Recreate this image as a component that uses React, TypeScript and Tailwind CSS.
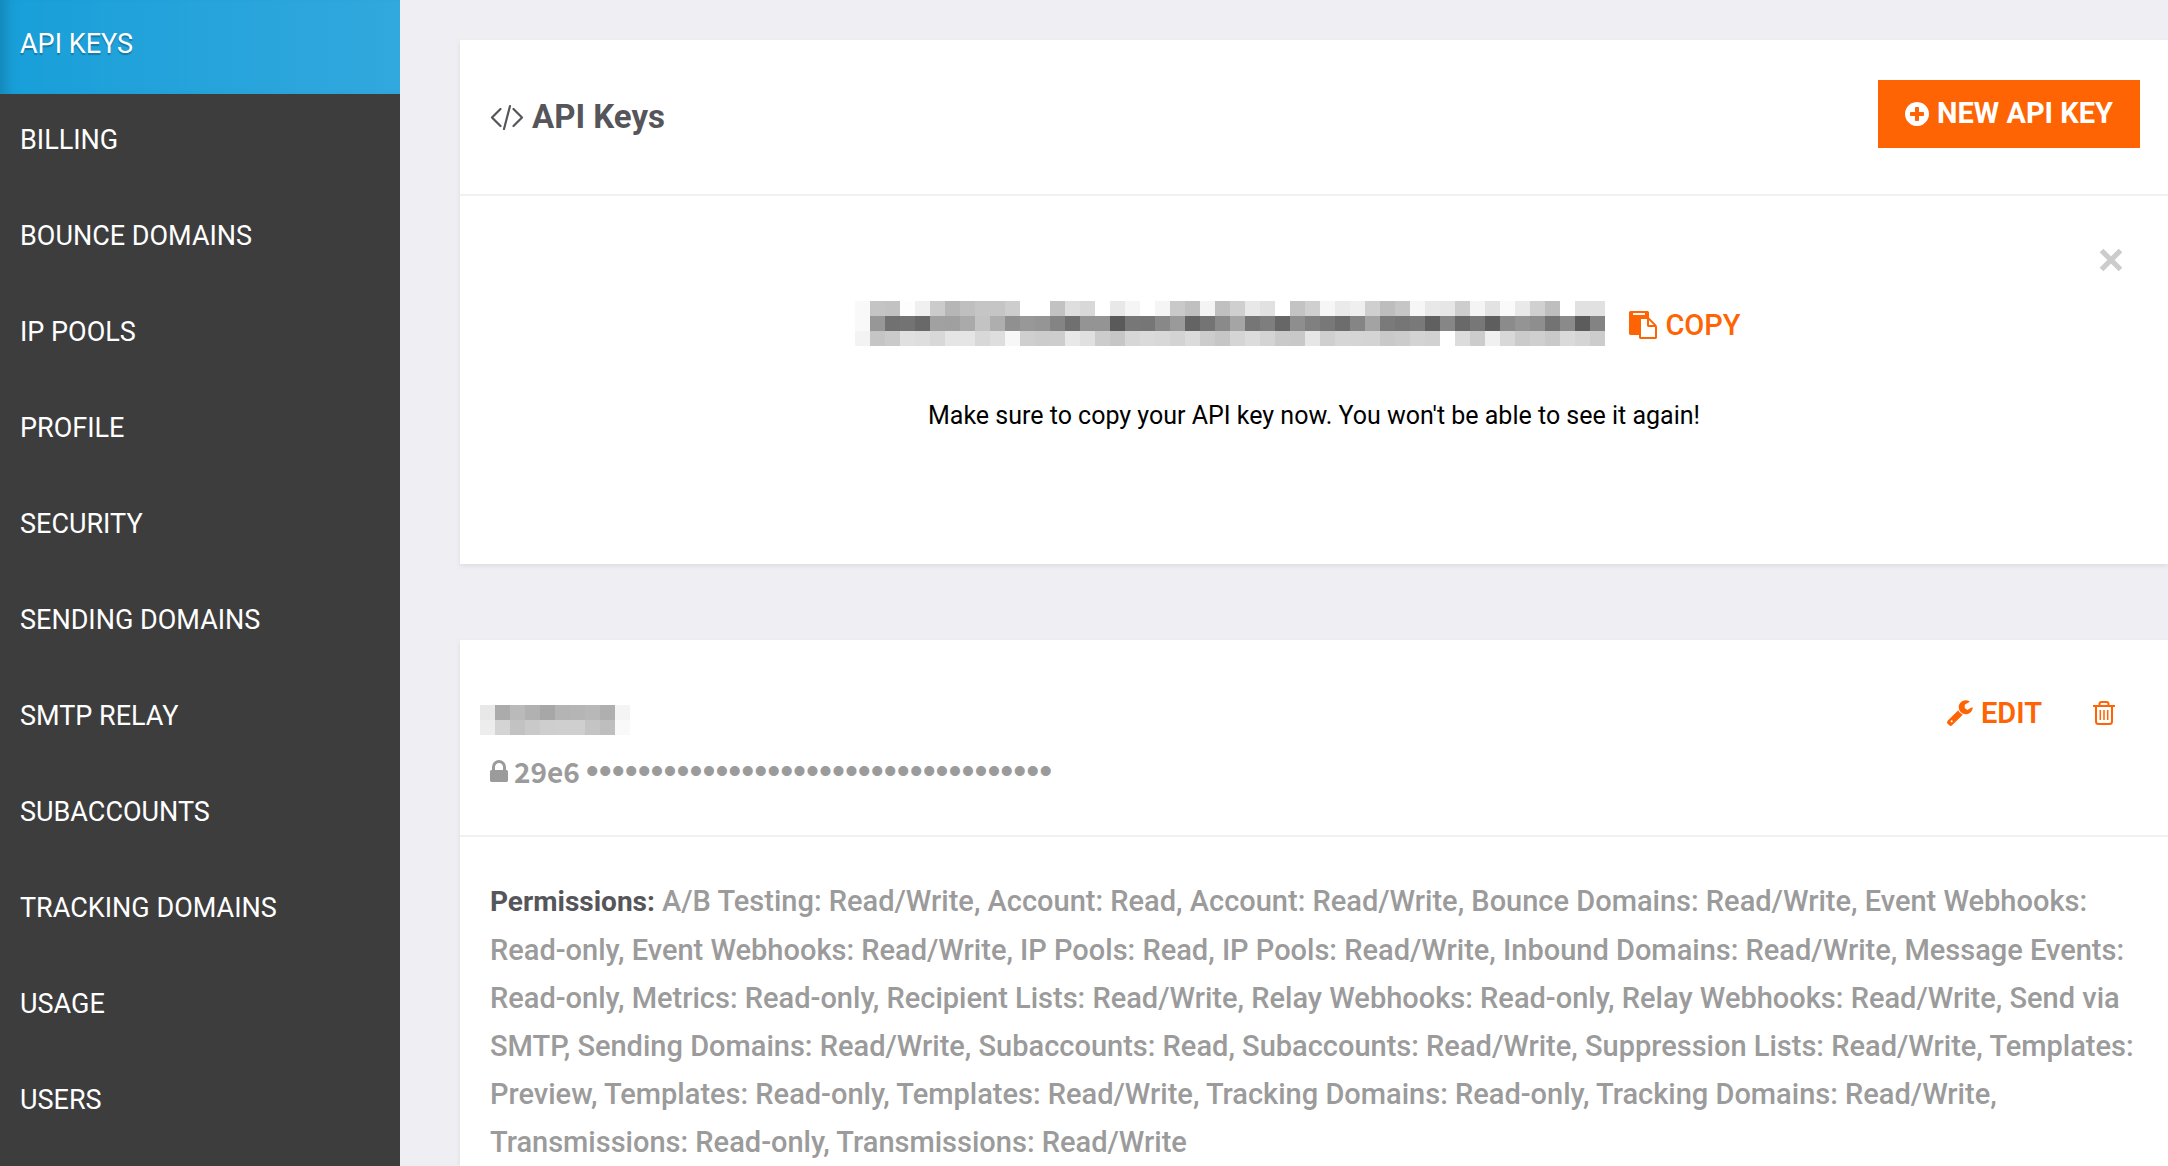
import { clsx } from "clsx";

const NAV_ITEMS = [
	"API Keys",
	"Billing",
	"Bounce Domains",
	"IP Pools",
	"Profile",
	"Security",
	"Sending Domains",
	"SMTP Relay",
	"Subaccounts",
	"Tracking Domains",
	"Usage",
	"Users",
];

const PERMISSIONS = [
	"A/B Testing: Read/Write",
	"Account: Read",
	"Account: Read/Write",
	"Bounce Domains: Read/Write",
	"Event Webhooks: Read-only",
	"Event Webhooks: Read/Write",
	"IP Pools: Read",
	"IP Pools: Read/Write",
	"Inbound Domains: Read/Write",
	"Message Events: Read-only",
	"Metrics: Read-only",
	"Recipient Lists: Read/Write",
	"Relay Webhooks: Read-only",
	"Relay Webhooks: Read/Write",
	"Send via SMTP",
	"Sending Domains: Read/Write",
	"Subaccounts: Read",
	"Subaccounts: Read/Write",
	"Suppression Lists: Read/Write",
	"Templates: Preview",
	"Templates: Read-only",
	"Templates: Read/Write",
	"Tracking Domains: Read-only",
	"Tracking Domains: Read/Write",
	"Transmissions: Read-only",
	"Transmissions: Read/Write",
];

// Grey levels of the redaction blocks, one hex pair per cell
const KEY_BLOCKS = [
	"F9C4C2FDF0CBB6BFC5C5CDFFFFC2DED8FFE8F5FFF5C9C0F4C0CFE8E1FFC3CFF6EAEFCFBDC6F6E8E6CDF4E2FAE9D0BEFFE1E1",
	"F997717369A1A0AAC3AE909895847094945A7776889A64748AA5767E678E80786D85A37A7679608669775E8B948E738A5C83",
	"F3C5CAE0DED8E5E5D8DEF7CFCCCDE8E0CCC6D7DAD8D3DBCCC6D5DCD4CAC8E6CFD6D5D4C9CCD3D1FFDCCCF0D8CBCFC9DAD5CC",
];
const NAME_BLOCKS = ["E8ABBAB1A7B4B5B8AFF4", "EDD4C2C9CECFCFC4BEF9"];

const CELL = 15;

function Redacted({ rows, label }: { rows: string[]; label: string }) {
	const cols = rows[0].length / 2;

	return (
		<svg
			role="img"
			aria-label={label}
			width={cols * CELL}
			height={rows.length * CELL}
			shapeRendering="crispEdges"
			className="shrink-0"
		>
			{rows.map((row, y) =>
				Array.from({ length: cols }, (_, x) => {
					const level = row.slice(x * 2, x * 2 + 2);
					return (
						<rect
							key={`${x}-${y}`}
							x={x * CELL}
							y={y * CELL}
							width={CELL}
							height={CELL}
							fill={`#${level}${level}${level}`}
						/>
					);
				}),
			)}
		</svg>
	);
}

// Font glyph outlines are y-up, so flip them inside the box
function GlyphIcon({
	d,
	viewBox,
	className,
}: {
	d: string;
	viewBox: string;
	className: string;
}) {
	return (
		<svg viewBox={viewBox} fill="currentColor" className={className} aria-hidden="true">
			<path transform="scale(1 -1)" d={d} />
		</svg>
	);
}

function PlusCircleIcon() {
	return (
		<GlyphIcon
			viewBox="0 -1408 1536 1536"
			className="size-6 shrink-0"
			d="M1216 576v128q0 26-19 45t-45 19h-256v256q0 26-19 45t-45 19h-128q-26 0-45-19t-19-45v-256h-256q-26 0-45-19t-19-45v-128q0-26 19-45t45-19h256v-256q0-26 19-45t45-19h128q26 0 45 19t19 45v256h256q26 0 45 19t19 45zM1536 640q0-209-103-385.500t-279.500-279.500-385.500-103-385.500 103-279.500 279.500-103 385.500 103 385.500 279.500 279.500 385.500 103 385.500-103 279.500-279.500 103-385.500z"
		/>
	);
}

function PasteIcon() {
	return (
		<GlyphIcon
			viewBox="0 -1536 1792 1792"
			className="size-7 shrink-0"
			d="M768-128h896v640h-416q-40 0-68 28t-28 68v416h-384v-1152zM1024 1312v64q0 13-9.500 22.500t-22.500 9.500h-704q-13 0-22.500-9.500t-9.500-22.500v-64q0-13 9.500-22.500t22.500-9.500h704q13 0 22.500 9.500t9.500 22.500zM1280 640h299l-299 299v-299zM1792 512v-672q0-40-28-68t-68-28h-960q-40 0-68 28t-28 68v160h-544q-40 0-68 28t-28 68v1344q0 40 28 68t68 28h1088q40 0 68-28t28-68v-328q21-13 36-28l408-408q28-28 48-76t20-88z"
		/>
	);
}

function WrenchIcon() {
	return (
		<GlyphIcon
			viewBox="20 -1420 1660 1660"
			className="size-[26px] shrink-0"
			d="M384 64q0 26-19 45t-45 19-45-19-19-45 19-45 45-19 45 19 19 45zM1028 484l-682-682q-37-37-90-37-52 0-91 37l-106 108q-38 36-38 90 0 53 38 91l681 681q39-98 114.500-173.500t173.500-114.500zM1662 919q0-39-23-106-47-134-164.500-217.500t-258.500-83.500q-185 0-316.500 131.500t-131.500 316.500 131.500 316.500 316.500 131.500q58 0 121.500-16.500t107.500-46.500q16-11 16-28t-16-28l-293-169v-224l193-107q5 3 79 48.500t135.500 81 70.500 35.500q15 0 23.500-10t8.500-25z"
		/>
	);
}

function LockIcon() {
	return (
		<GlyphIcon
			viewBox="0 -1408 1152 1408"
			className="h-[22px] w-[18px] shrink-0"
			d="M320 768h512v192q0 106-75 181t-181 75-181-75-75-181v-192zM1152 672v-576q0-40-28-68t-68-28h-960q-40 0-68 28t-28 68v576q0 40 28 68t68 28h32v192q0 184 132 316t316 132 316-132 132-316v-192h32q40 0 68-28t28-68z"
		/>
	);
}

function CodeIcon() {
	return (
		<svg
			viewBox="0 0 34 26"
			fill="none"
			stroke="currentColor"
			strokeWidth="2.200"
			strokeLinecap="round"
			strokeLinejoin="round"
			className="h-[26px] w-[34px] shrink-0"
			aria-hidden="true"
		>
			<path d="M10.500 5 2 13.500 10.500 22M23.500 5 32 13.500 23.500 22M20 2 14 25" />
		</svg>
	);
}

function CloseIcon() {
	return (
		<svg
			viewBox="0 0 24 24"
			stroke="currentColor"
			strokeWidth="5.200"
			className="size-6"
			aria-hidden="true"
		>
			<path d="M2.500 2.500 21.500 21.500M21.500 2.500 2.500 21.500" />
		</svg>
	);
}

function TrashIcon() {
	return (
		<svg
			viewBox="0 0 22 24"
			fill="none"
			stroke="currentColor"
			strokeWidth="2"
			className="h-6 w-[22px]"
			aria-hidden="true"
		>
			<path d="M0 5h22M6.500 5V3Q6.500 1 8.500 1h5Q15.500 1 15.500 3v2" />
			<path d="M3 5v15.500Q3 23 5.500 23h11Q19 23 19 20.500V5" />
			<path strokeWidth="1.500" d="M7.300 9v10M11 9v10M14.700 9v10" />
		</svg>
	);
}

function Sidebar() {
	return (
		<nav className="w-[400px] shrink-0 bg-[#3d3d3d]">
			<ul className="-mt-0.5">
				{NAV_ITEMS.map((item, i) => (
					<li key={item}>
						<a
							href="#"
							className={clsx(
								"flex h-24 items-center pb-[3px] pl-5 text-[27px] text-white uppercase",
								i === 0 &&
									"bg-linear-to-r from-[#179fd9] to-[#31a8de] shadow-[inset_12px_0_12px_-6px_rgba(0,0,0,0.15)] [text-shadow:0_2px_1px_rgba(0,0,0,0.25)]",
							)}
						>
							{item}
						</a>
					</li>
				))}
			</ul>
		</nav>
	);
}

function NewKeyCard() {
	return (
		<section className="bg-white shadow-[0_2px_5px_rgba(0,0,0,0.08)]">
			<header className="flex items-start justify-between border-b-2 border-[#f1f1f1] pt-10 pr-7 pb-10 pl-[30px]">
				<h1 className="flex h-[74px] items-center gap-2 text-[33px] font-bold text-[#55555a]">
					<CodeIcon />
					API Keys
				</h1>
				<button
					type="button"
					className="flex h-[68px] items-center gap-2 bg-[#fe6403] px-[27px] text-[29px] font-bold text-white"
				>
					<PlusCircleIcon />
					NEW API KEY
				</button>
			</header>

			<div className="flex flex-col px-[45px] pt-[52px] pb-[130px]">
				<button type="button" aria-label="Close" className="self-end text-[#cccccc]">
					<CloseIcon />
				</button>
				<div className="mt-[26px] flex items-center justify-center gap-6 pr-8">
					<Redacted rows={KEY_BLOCKS} label="API key" />
					<button
						type="button"
						className="flex items-center gap-2 pt-1 text-[29px] leading-[46px] font-medium text-[#fe6403]"
					>
						<PasteIcon />
						COPY
					</button>
				</div>
				<p className="mt-[50px] text-center text-[25px] leading-9 text-black">
					Make sure to copy your API key now. You won't be able to see it again!
				</p>
			</div>
		</section>
	);
}

function KeyCard() {
	return (
		<section className="flex-1 bg-white shadow-[0_2px_5px_rgba(0,0,0,0.08)]">
			<header className="flex items-start justify-between border-b-2 border-[#f1f1f1] pr-[53px] pb-10 pl-5">
				<div className="pt-[65px]">
					<Redacted rows={NAME_BLOCKS} label="Key name" />
					<p className="mt-3 flex items-center gap-1.5 pl-2.5 font-['Noto_Sans_CJK_JP',sans-serif] text-[28px] leading-[48px] font-bold text-[#9b9b9b]">
						<LockIcon />
						29e6
						<span className="font-['Liberation_Sans',sans-serif] text-[37px] font-normal">
							{"•".repeat(36)}
						</span>
					</p>
				</div>
				<div className="flex items-center gap-[51px] pt-12 text-[#fe6403]">
					<button
						type="button"
						className="flex items-center gap-2 text-[29px] leading-[50px] font-semibold"
					>
						<WrenchIcon />
						EDIT
					</button>
					<button type="button" aria-label="Delete">
						<TrashIcon />
					</button>
				</div>
			</header>

			<p className="px-[30px] pt-10 text-[29px] leading-[48px] font-medium text-[#9b9b9b]">
				<strong className="text-[28px] font-bold text-[#55555a]">Permissions:</strong>{" "}
				{PERMISSIONS.join(", ")}
			</p>
		</section>
	);
}

export default function App() {
	return (
		<div className="flex min-h-screen bg-[#efeef3] font-['Roboto',sans-serif]">
			<Sidebar />
			<main className="flex min-w-0 flex-1 flex-col gap-[76px] pt-10 pl-[60px]">
				<NewKeyCard />
				<KeyCard />
			</main>
		</div>
	);
}
